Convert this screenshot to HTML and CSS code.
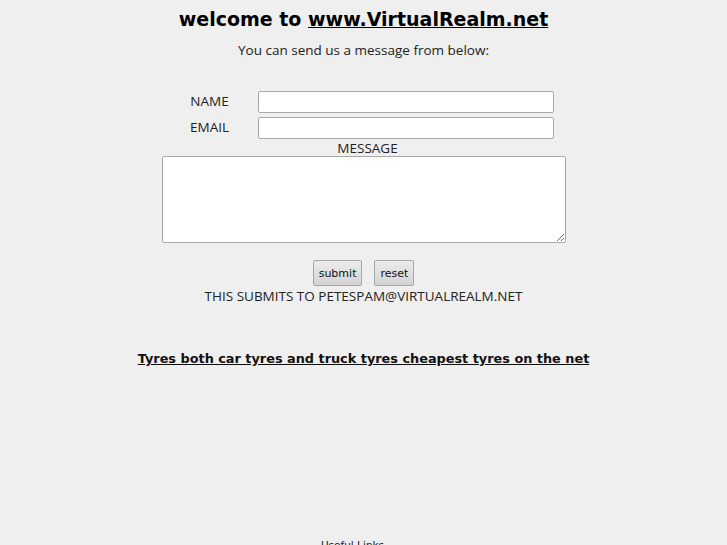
FILE: index.html
```html
<!DOCTYPE html>
<html>
<head>
<meta charset="utf-8">
<title>VirtualRealm</title>
<link rel="stylesheet" href="styles.css">
</head>
<body>
<div class="page">
  <h1 class="title">welcome to <a href="#" class="site-link">www.VirtualRealm.net</a></h1>
  <p class="intro">You can send us a message from below:</p>
  <form class="contact">
    <label class="lbl">NAME</label>
    <div class="field"><input type="text" class="txt"></div>
    <label class="lbl">EMAIL</label>
    <div class="field"><input type="text" class="txt"></div>
    <div class="msg-label">MESSAGE</div>
    <textarea class="msg"></textarea>
    <div class="buttons">
      <button type="button" class="btn">submit</button>
      <button type="reset" class="btn">reset</button>
    </div>
    <div class="note">THIS SUBMITS TO PETESPAM@VIRTUALREALM.NET</div>
  </form>
  <div class="promo"><a href="#" class="tyres">Tyres both car tyres and truck tyres cheapest tyres on the net</a></div>
  <div class="useful">Useful Links</div>
</div>
</body>
</html>
```

FILE: styles.css
```css
html, body {
  margin: 0;
  padding: 0;
  background: #efefef;
}
body {
  font-family: "Open Sans", sans-serif;
  color: #222;
  font-size: 13.5px;
}
.page {
  display: flex;
  flex-direction: column;
  align-items: center;
  width: 727px;
  overflow: hidden;
  height: 545px;
}
.title {
  font-family: "DejaVu Sans", sans-serif;
  font-weight: bold;
  font-size: 19px;
  line-height: 22px;
  margin: 8px 0 0 0;
  color: #000;
}
.site-link {
  color: #000;
  text-decoration: underline;
}
.intro {
  margin: 11px 0 0 0;
  line-height: 18px;
}
.contact {
  margin-top: 32px;
  display: grid;
  grid-template-columns: 96px 308px;
  width: 404px;
  row-gap: 4px;
}
.lbl {
  text-align: center;
  line-height: 20px;
}
.field {
  display: flex;
}
.txt {
  width: 296px;
  height: 22px;
  box-sizing: border-box;
  border: 1px solid #a9a9a9;
  border-radius: 2px;
  background: #fff;
  margin: 0;
  padding: 1px 2px;
}
.msg-label {
  grid-column: 1 / 3;
  text-align: center;
  padding-left: 8px;
  line-height: 14px;
  margin-top: -2px;
  margin-bottom: -3px;
}
.msg {
  grid-column: 1 / 3;
  width: 404px;
  height: 87px;
  box-sizing: border-box;
  border: 1px solid #a9a9a9;
  border-radius: 2px;
  background: #fff;
  margin: 0;
  resize: both;
}
.buttons {
  grid-column: 1 / 3;
  display: flex;
  justify-content: center;
  gap: 12px;
  margin-top: 13px;
}
.btn {
  font-family: "DejaVu Sans", sans-serif;
  font-size: 11px;
  color: #111;
  height: 26px;
  padding: 0 5px;
  border: 1px solid #a6a6a6;
  border-radius: 2px;
  background: linear-gradient(#ececec, #d3d3d3);
}
.note {
  grid-column: 1 / 3;
  text-align: center;
  line-height: 16px;
  margin-top: -2px;
}
.promo {
  margin-top: 45px;
}
.tyres {
  font-family: "DejaVu Sans", sans-serif;
  font-weight: bold;
  font-size: 12.85px;
  color: #111;
  text-decoration: underline;
}
.useful {
  margin-top: 172px;
  padding-right: 22px;
  font-family: "DejaVu Sans", sans-serif;
  font-size: 10.5px;
  line-height: 13px;
  color: #222;
}
```
